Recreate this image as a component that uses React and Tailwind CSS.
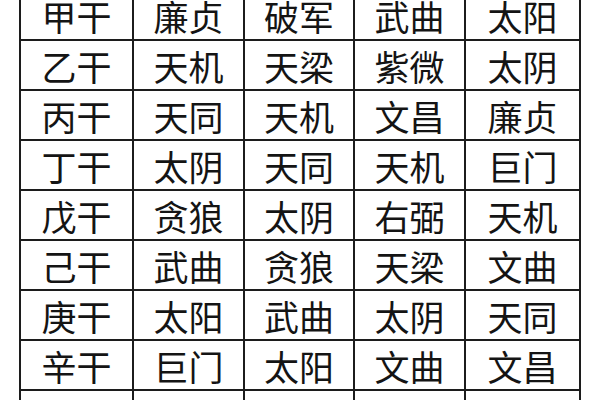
const rows = [
  ["甲干", "廉贞", "破军", "武曲", "太阳"],
  ["乙干", "天机", "天梁", "紫微", "太阴"],
  ["丙干", "天同", "天机", "文昌", "廉贞"],
  ["丁干", "太阴", "天同", "天机", "巨门"],
  ["戊干", "贪狼", "太阴", "右弼", "天机"],
  ["己干", "武曲", "贪狼", "天梁", "文曲"],
  ["庚干", "太阳", "武曲", "太阴", "天同"],
  ["辛干", "巨门", "太阳", "文曲", "文昌"],
  ["壬干", "天梁", "紫微", "左辅", "武曲"],
];

export default function App() {
  return (
    <div className="w-[600px] h-[400px] bg-white overflow-hidden">
      <div
        className="ml-[19px] mt-[-11px] grid grid-cols-[113px_111px_110px_111px_115px] w-max border-l-2 border-t-2 border-[#1c1c1c] text-[#141414]"
        style={{ fontFamily: '"Noto Sans CJK SC", "Noto Sans", sans-serif' }}
      >
        {rows.map((r, i) =>
          r.map((c, j) => (
            <div
              key={i + "-" + j}
              className="h-[50px] border-r-2 border-b-2 border-[#1c1c1c] flex items-center justify-center text-[35px] leading-none"
            >
              {c}
            </div>
          ))
        )}
      </div>
    </div>
  );
}
